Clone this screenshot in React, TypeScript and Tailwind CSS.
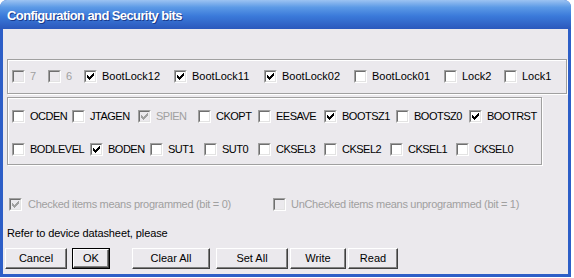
import React from 'react'

type Item = { label: string; w: number; checked?: boolean; disabled?: boolean }

const row1: Item[] = [
  { label: '7', w: 36, disabled: true },
  { label: '6', w: 36, disabled: true },
  { label: 'BootLock12', w: 90, checked: true },
  { label: 'BootLock11', w: 90, checked: true },
  { label: 'BootLock02', w: 90, checked: true },
  { label: 'BootLock01', w: 90 },
  { label: 'Lock2', w: 60 },
  { label: 'Lock1', w: 50 },
]

const row2: Item[] = [
  { label: 'OCDEN', w: 60 },
  { label: 'JTAGEN', w: 66 },
  { label: 'SPIEN', w: 60, checked: true, disabled: true },
  { label: 'CKOPT', w: 60 },
  { label: 'EESAVE', w: 66 },
  { label: 'BOOTSZ1', w: 72, checked: true },
  { label: 'BOOTSZ0', w: 73 },
  { label: 'BOOTRST', w: 60, checked: true },
]

const row3: Item[] = [
  { label: 'BODLEVEL', w: 78 },
  { label: 'BODEN', w: 60, checked: true },
  { label: 'SUT1', w: 54 },
  { label: 'SUT0', w: 54 },
  { label: 'CKSEL3', w: 66 },
  { label: 'CKSEL2', w: 66 },
  { label: 'CKSEL1', w: 66 },
  { label: 'CKSEL0', w: 60 },
]

function Tick({ color }: { color: string }) {
  // classic 7x7 pixel check mark
  const cols = [2, 3, 4, 3, 2, 1, 0]
  return (
    <svg width="7" height="7" viewBox="0 0 7 7" shapeRendering="crispEdges">
      {cols.map((y, x) => (
        <rect key={x} x={x} y={y} width="1" height="3" fill={color} />
      ))}
    </svg>
  )
}

function Box({ checked, disabled }: { checked?: boolean; disabled?: boolean }) {
  return (
    <div className="w-[13px] h-[13px] shrink-0 border border-t-[#a0a0a0] border-l-[#a0a0a0] border-b-white border-r-white">
      <div
        className={`w-full h-full flex items-center justify-center border border-t-[#6f6f6f] border-l-[#6f6f6f] border-b-[#e3e3e3] border-r-[#e3e3e3] ${
          disabled ? 'bg-[#ebe9ed]' : 'bg-white'
        }`}
      >
        {checked && <Tick color={disabled ? '#a0a0a0' : '#000'} />}
      </div>
    </div>
  )
}

function Check({ item, tight }: { item: Item; tight?: boolean }) {
  return (
    <div className="flex items-center gap-[5px] shrink-0" style={{ width: item.w }}>
      <Box checked={item.checked} disabled={item.disabled} />
      <span
        className={`${item.disabled ? 'text-[#a0a0a0]' : 'text-black'} ${tight ? 'tracking-[-0.5px]' : ''}`}
      >
        {item.label}
      </span>
    </div>
  )
}

function Btn({ label, w, def }: { label: string; w: number; def?: boolean }) {
  const inner = (
    <div className="h-full flex items-center justify-center border border-t-white border-l-white border-b-[#404040] border-r-[#404040] shadow-[inset_-1px_-1px_0_#808080] bg-[#ebe9ed]">
      {label}
    </div>
  )
  return (
    <div className="h-[21px] shrink-0" style={{ width: w }}>
      {def ? <div className="h-full border border-black">{inner}</div> : inner}
    </div>
  )
}

export default function App() {
  return (
    <div className="w-[574px] h-[278px] bg-white text-[11px] leading-[13px]" style={{ fontFamily: '"Liberation Sans", Arial, sans-serif' }}>
      <div className="w-[571px] h-[277px] flex flex-col rounded-t-[7px] bg-[#2d5ec7] px-[3px] pb-[3px]">
        <div className="h-[29px] -mx-[3px] rounded-t-[7px] bg-[linear-gradient(#9cc3f2_0%,#5c9ae6_25%,#3b7ada_55%,#2b58bc_100%)] flex items-center pl-[7px] pt-[1px]">
          <span className="text-white font-bold text-[13px] tracking-[-0.6px] [text-shadow:1px_1px_0_#1a3a8a]">
            Configuration and Security bits
          </span>
        </div>
        <div className="flex-1 bg-[#ebe9ed] flex flex-col pl-[4px] pr-[1px]">
          <div className="mt-[30px] w-[560px] h-[35px] border border-[#a0a0a0] shadow-[inset_1px_1px_0_#fff,1px_1px_0_#fff] flex items-center pl-[4px]">
            {row1.map((it) => (
              <Check key={it.label} item={it} />
            ))}
          </div>
          <div className="mt-[3px] w-[535px] h-[68px] border border-[#a0a0a0] shadow-[inset_1px_1px_0_#fff,1px_1px_0_#fff] flex flex-col pl-[4px] pt-[12px] gap-[20px]">
            <div className="flex items-center">
              {row2.map((it) => (
                <Check key={it.label} item={it} tight />
              ))}
            </div>
            <div className="flex items-center">
              {row3.map((it) => (
                <Check key={it.label} item={it} tight />
              ))}
            </div>
          </div>
          <div className="mt-[33px] flex items-center ml-[2px] tracking-[-0.3px]">
            <div className="w-[264px] flex items-center gap-[6px]">
              <Box checked disabled />
              <span className="text-[#a0a0a0]">Checked items means programmed (bit = 0)</span>
            </div>
            <div className="flex items-center gap-[5px]">
              <Box disabled />
              <span className="text-[#a0a0a0]">UnChecked items means unprogrammed (bit = 1)</span>
            </div>
          </div>
          <div className="mt-[16px] tracking-[-0.1px]">Refer to device datasheet, please</div>
          <div className="mt-[8px] -ml-[2px] flex">
            <Btn label="Cancel" w={62} />
            <div className="ml-[5px]">
              <Btn label="OK" w={38} def />
            </div>
            <div className="ml-[22px]">
              <Btn label="Clear All" w={78} />
            </div>
            <div className="ml-[6px]">
              <Btn label="Set All" w={72} />
            </div>
            <div className="ml-[2px]">
              <Btn label="Write" w={56} />
            </div>
            <div className="ml-[2px]">
              <Btn label="Read" w={50} />
            </div>
          </div>
        </div>
      </div>
    </div>
  )
}
